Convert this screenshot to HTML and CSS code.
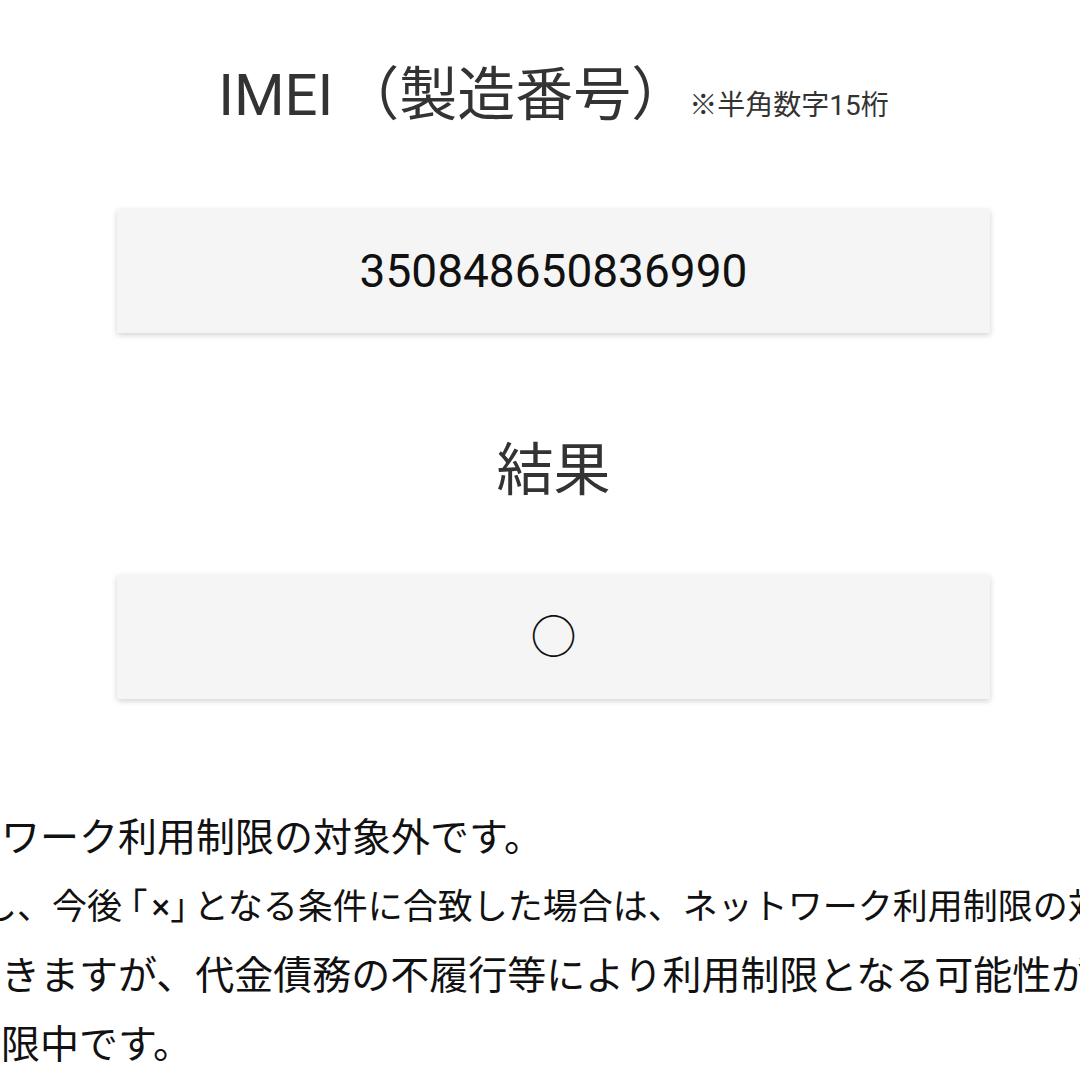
FILE: index.html
```html
<!DOCTYPE html>
<html lang="ja">
<head>
    <meta charset="utf-8">
    <title>ネットワーク利用制限確認結果</title>
    <meta name="viewport" content="width=device-width, initial-scale=1.0">
    <link rel="stylesheet" href="styles.css">
</head>
<body>
    <div class="page">
        <h2 class="heading heading-imei"><span class="latin">IMEI</span>（製造番号）<span class="note">※半角数字15桁</span></h2>
        <div class="result-box">
            <span class="imei-number">350848650836990</span>
        </div>

        <h2 class="heading heading-result">結果</h2>
        <div class="result-box">
            <span class="result-mark">○</span>
        </div>
    </div>

    <div class="message">
        <p class="line">ワーク利用制限の対象外です。</p>
        <p class="line line-small">し、今後<span class="open">「</span><span class="cross">×</span><span class="close">」</span>となる条件に合致した場合は、ネットワーク利用制限の対象となります。</p>
        <p class="line">きますが、代金債務の不履行等により利用制限となる可能性があります。</p>
        <p class="line">限中です。</p>
    </div>
</body>
</html>
```

FILE: styles.css
```css
body {
    font-family: Roboto, "Noto Sans CJK JP", sans-serif;
    background: #fff;
    color: #111;
    margin: 0;
    overflow: hidden;
}
.page {
    width: 873px;
    margin-left: 117px;
}
.heading {
    font-weight: normal;
    line-height: 1;
    color: #333;
    text-align: center;
    margin: 0;
}
.heading-imei {
    font-size: 58px;
    padding-top: 66px;
    margin-bottom: 85px;
}
.heading-imei .latin {
    margin-right: 8px;
}
.heading-result {
    font-size: 57px;
    margin-top: 109px;
    margin-bottom: 76px;
}
.note {
    font-size: 28px;
}
.result-box {
    height: 124px;
    background: #f5f5f5;
    box-shadow: 0 2px 6px rgba(0,0,0,0.18);
    display: flex;
    align-items: center;
    justify-content: center;
}
.imei-number {
    font-size: 46px;
    color: #111;
}
.result-mark {
    font-size: 46px;
    line-height: 1;
    color: #111;
}
.message {
    margin-top: 105px;
    margin-left: 1px;
    font-size: 39px;
    white-space: nowrap;
}
.line {
    margin: 0;
    line-height: 69px;
}
.line-small {
    font-size: 35px;
    margin-left: -19px;
}
.open,
.close {
    font-feature-settings: "halt";
}
.open {
    margin-left: 8px;
}
.cross {
    margin-left: 4px;
}
.close {
    margin-right: 6px;
}
```
